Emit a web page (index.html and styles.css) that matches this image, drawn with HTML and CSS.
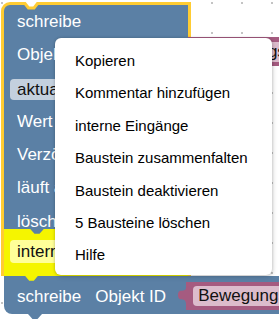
FILE: index.html
```html
<!DOCTYPE html>
<html lang="de">
<head>
    <meta charset="UTF-8">
    <meta name="viewport" content="width=device-width, initial-scale=1.0">
    <title>Blockly Kontextmenü</title>
    <link rel="stylesheet" href="styles.css">
</head>
<body>
    <div class="workspace">
        <!-- selected block -->
        <div class="block selected">
            <div class="block-body">
                <div class="row">schreibe</div>
                <div class="row row-obj">Objekt ID
                    <div class="value value-top">
                        <span class="field field-pink">Bewegungsmelder</span>
                    </div>
                </div>
                <div class="row"><span class="field field-blue">aktualisieren</span></div>
                <div class="row">Wert</div>
                <div class="row">Verzögerung</div>
                <div class="row">läuft ab</div>
                <div class="row row-last">löschen</div>
            </div>
            <div class="block-yellow">
                <span class="field field-yellow">interner Wert</span>
            </div>
            <svg class="notch-top" width="18" height="10" viewBox="0 0 18 10">
                <path d="M3 0 V3.5 L6.5 8 H12 L15.5 3.5 V0 Z" fill="#fff"/>
                <path d="M0 3.5 H3 L6.5 8 H12 L15.5 3.5 H18" fill="none" stroke="#fc3" stroke-width="3"/>
            </svg>
        </div>

        <!-- next block -->
        <div class="block next">
            <span>schreibe</span>
            <span>Objekt ID</span>
            <div class="value value-inline">
                <svg class="tab" width="8" height="28" viewBox="0 0 8 28">
                    <path d="M8 5 C8 12 0 5 0 13 S8 14 8 22 Z" fill="#a55b80"/>
                </svg>
                <div class="value-body">
                    <span class="field field-pink">Bewegungsmelder</span>
                </div>
            </div>
        </div>

        <!-- context menu -->
        <div class="menu">
            <div class="menu-item">Kopieren</div>
            <div class="menu-item">Kommentar hinzufügen</div>
            <div class="menu-item">interne Eingänge</div>
            <div class="menu-item">Baustein zusammenfalten</div>
            <div class="menu-item">Baustein deaktivieren</div>
            <div class="menu-item">5 Bausteine löschen</div>
            <div class="menu-item">Hilfe</div>
        </div>
    </div>
</body>
</html>
```

FILE: styles.css
```css
body {
    margin: 0;
    font-family: 'Liberation Sans', Arial, sans-serif;
    overflow: hidden;
}
.workspace {
    position: relative;
    width: 279px;
    height: 327px;
    overflow: hidden;
    background-color: #fff;
    background-image: radial-gradient(circle, #c4c4c4 1px, transparent 1.3px);
    background-size: 30px 30px;
    background-position: -13px -12px;
}

/* blocks */
.block {
    position: absolute;
    color: #fff;
    font-size: 17px;
    white-space: nowrap;
}
.selected {
    left: 1px;
    top: 2px;
    width: 184px;
    border: 3px solid #fc3;
    border-bottom: 0;
    border-top-left-radius: 9px;
    background: #fc3;
}
.block-body {
    position: relative;
    background: #5b80a5;
    border-top-left-radius: 6px;
}
.block-body::after {
    content: '';
    position: absolute;
    left: 26px;
    bottom: -5px;
    width: 14px;
    height: 5px;
    background: #5b80a5;
    clip-path: polygon(0 0, 100% 0, 68% 100%, 32% 100%);
    z-index: 2;
}
.row {
    position: relative;
    height: 33.3px;
    line-height: 33.3px;
    padding-left: 13px;
}
.row-last {
    height: 24px;
}
.notch-top {
    position: absolute;
    left: 18px;
    top: -5px;
}

.field {
    display: inline-block;
    border-radius: 4px;
    padding: 0 7px;
    color: #111;
}
.field-blue {
    margin-left: -7px;
    line-height: 21px;
    vertical-align: middle;
    background: #c3d0de;
}
.field-pink {
    line-height: 20px;
    padding: 0 5px;
    background: #dcbccc;
}
.field-yellow {
    line-height: 23px;
    background: #ffff99;
}

.block-yellow {
    position: relative;
    height: 47px;
    padding: 11px 0 0 6px;
    box-sizing: border-box;
    background: #f5f500;
}
.block-yellow::after {
    content: '';
    position: absolute;
    left: 21px;
    bottom: -5px;
    width: 13px;
    height: 5px;
    background: #f5f500;
    clip-path: polygon(0 0, 100% 0, 68% 100%, 32% 100%);
    z-index: 2;
}

.value {
    display: flex;
    align-items: center;
}
.value-top {
    position: absolute;
    left: 100%;
    top: -1px;
    width: 120px;
    height: 29px;
    padding-left: 4px;
    background: #a55b80;
    box-sizing: border-box;
}

.next {
    left: 4px;
    top: 276px;
    width: 300px;
    height: 38px;
    display: flex;
    align-items: center;
    gap: 14px;
    padding: 4px 0 0 13px;
    box-sizing: border-box;
    background: #5b80a5;
    border-bottom-left-radius: 8px;
}
.next::after {
    content: '';
    position: absolute;
    left: 24px;
    bottom: -5px;
    width: 14px;
    height: 5px;
    background: #5b80a5;
    clip-path: polygon(0 0, 100% 0, 68% 100%, 32% 100%);
}
.value-inline {
    margin-left: -2px;
    margin-top: -2px;
}
.tab {
    display: block;
}
.value-body {
    height: 28px;
    display: flex;
    align-items: center;
    padding-left: 7px;
    background: #a55b80;
}

/* context menu */
.menu {
    position: absolute;
    left: 55px;
    top: 38px;
    width: 217px;
    height: 237px;
    box-sizing: border-box;
    padding: 7px 0 6px;
    background: #fff;
    border-radius: 6px;
    box-shadow: 0 0 3px rgba(0, 0, 0, 0.2), 1px 2px 5px rgba(0, 0, 0, 0.15);
    z-index: 5;
}
.menu-item {
    height: 32.4px;
    line-height: 32.4px;
    padding-left: 20px;
    font-size: 15px;
    color: #000;
    white-space: nowrap;
}
```
